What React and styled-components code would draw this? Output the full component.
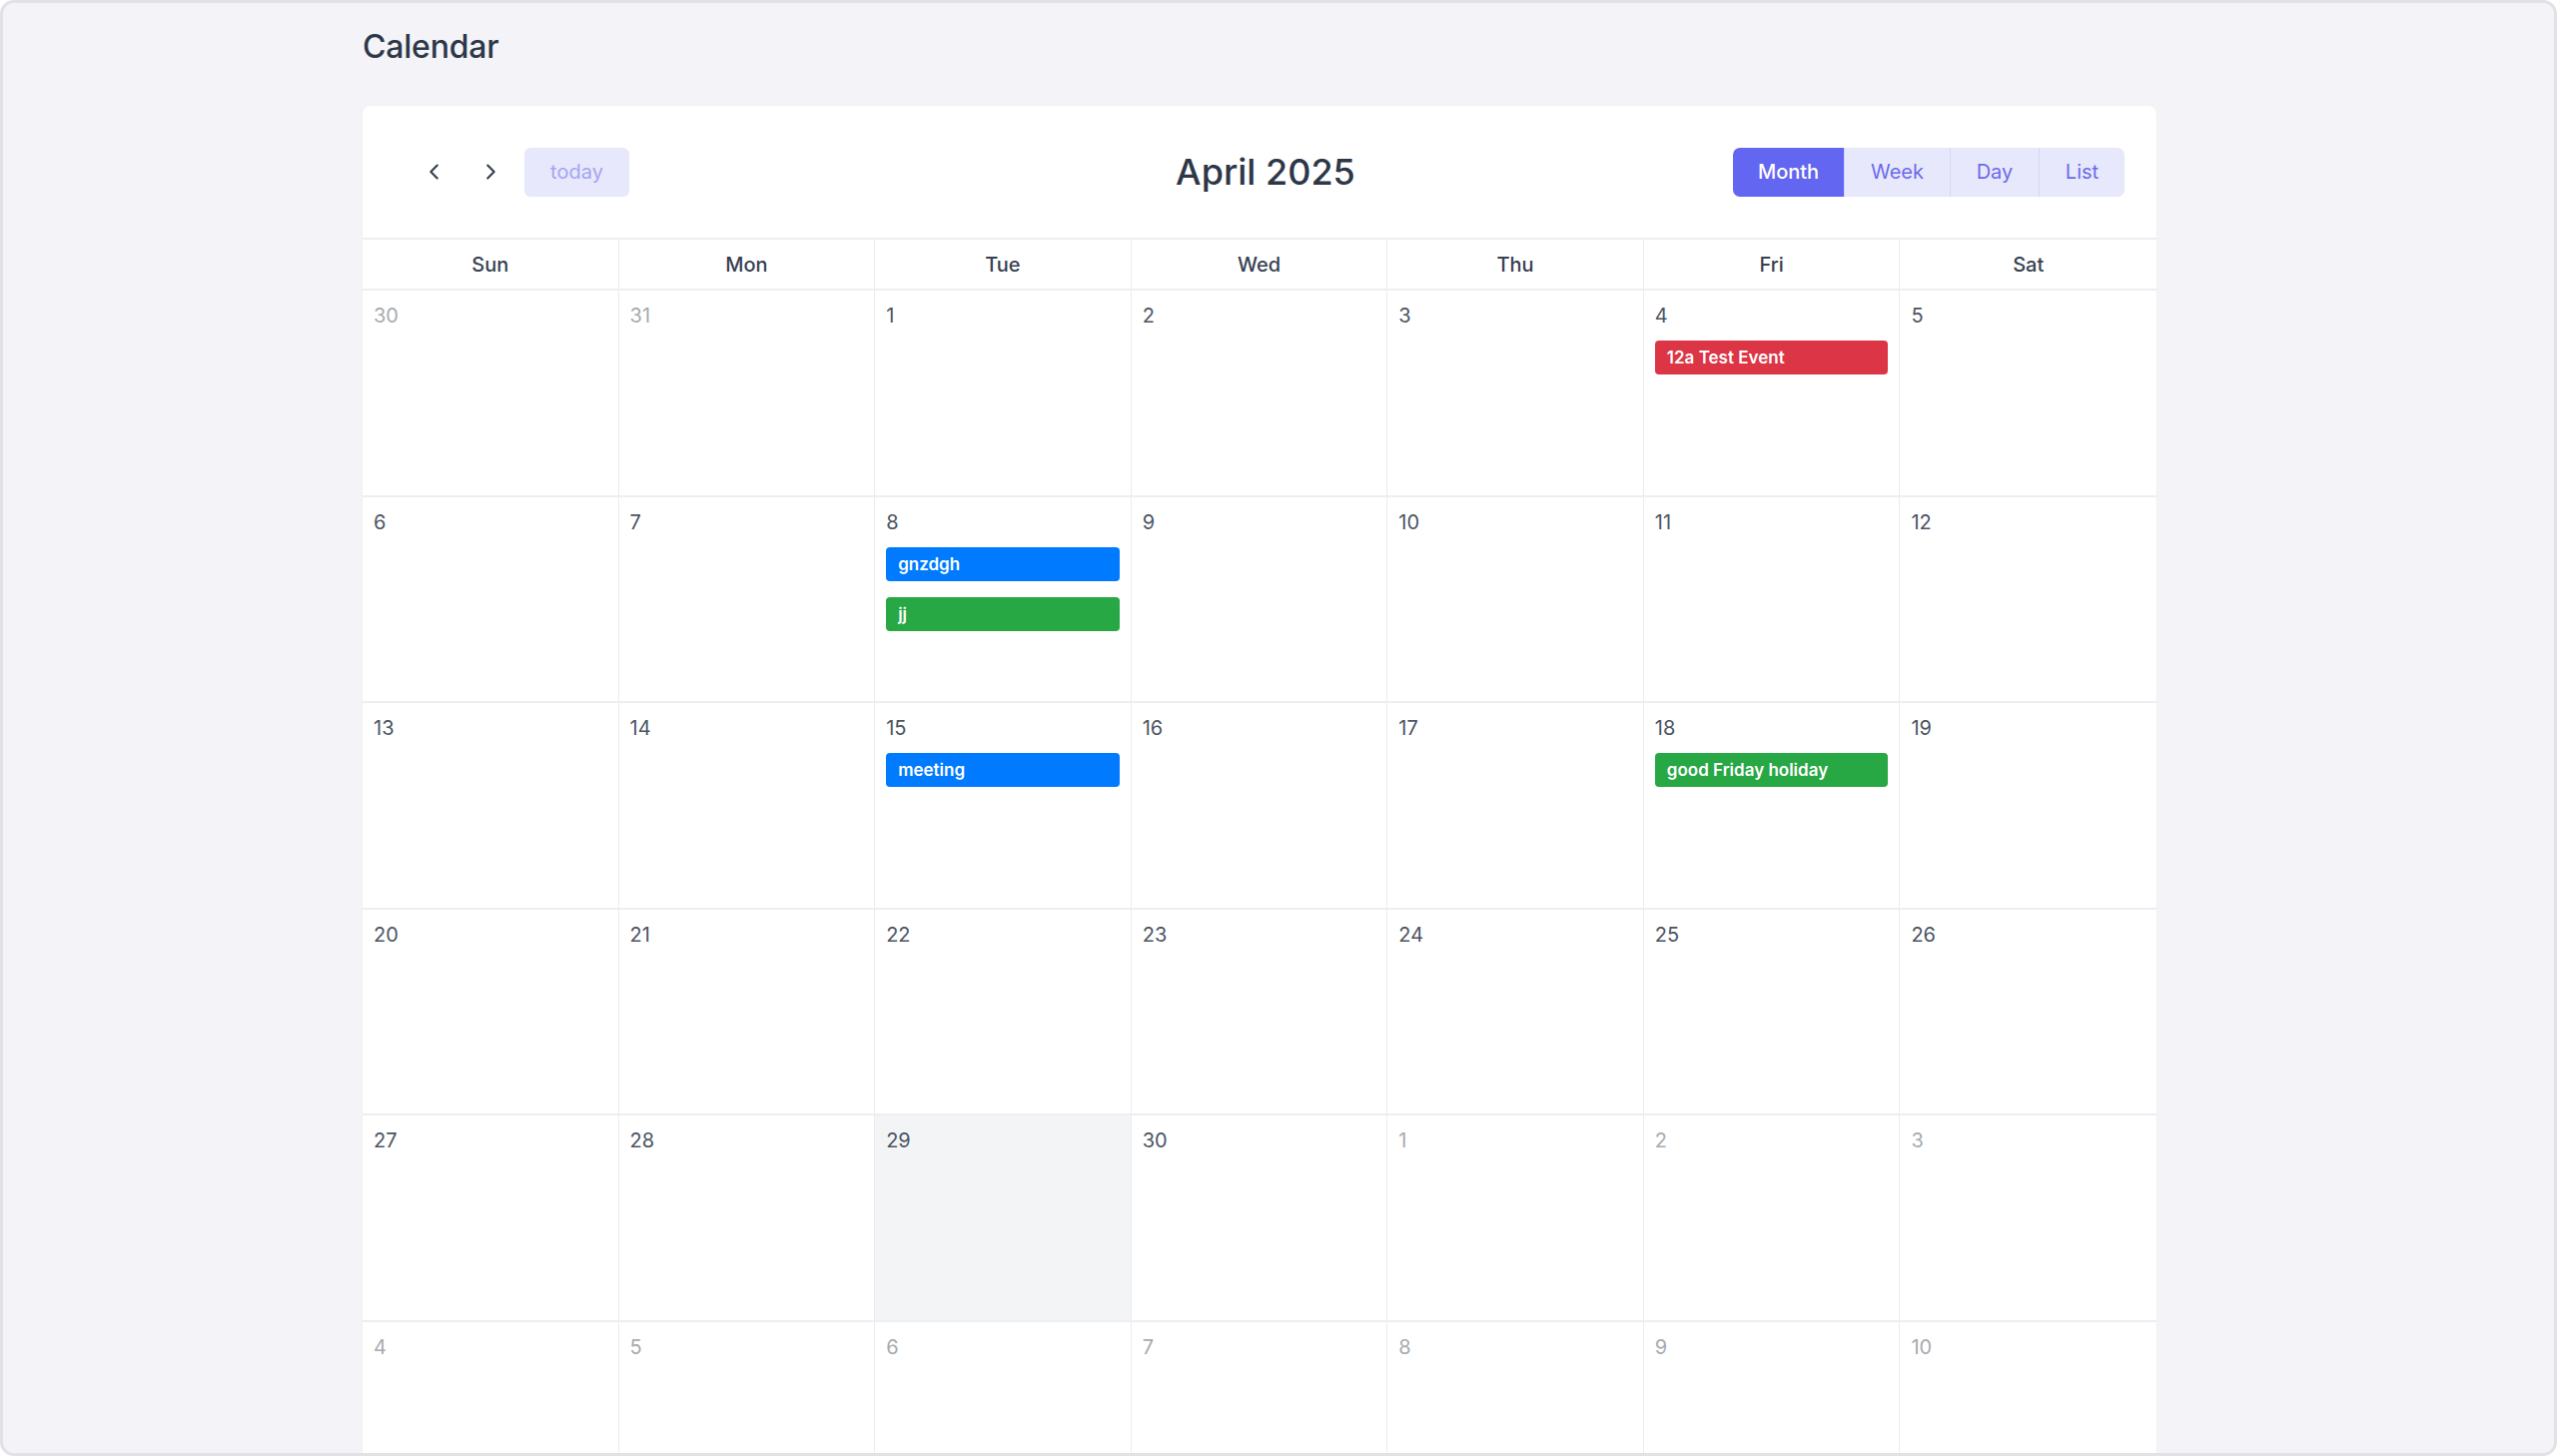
import React from "react";
import styled, { createGlobalStyle } from "styled-components";

const Global = createGlobalStyle`
  html, body { margin: 0; padding: 0; overflow: hidden; }
  body { font-family: "Inter", "Noto Sans", sans-serif; }
  * { box-sizing: border-box; }
`;

const Frame = styled.div`
  width: 2560px; height: 1458px; background: #f4f4f8;
  border: 3px solid #e2e2e6; border-radius: 14px; overflow: hidden;
  padding: 0 0 0 360px;
`;
const PageTitle = styled.h1`
  margin: 0; height: 103px; padding-top: 24px;
  font-size: 32px; font-weight: 500; color: #2d3748; letter-spacing: -0.2px;
`;
const Card = styled.div`
  width: 1796px; background: #fff; border-radius: 8px 8px 0 0;
  box-shadow: 0 1px 3px rgba(0,0,0,0.05);
`;
const Toolbar = styled.div`
  height: 134px; display: grid; grid-template-columns: 1fr auto 1fr;
  align-items: center; padding: 0 32px 0 44px; border-bottom: 2px solid #eeeef2;
`;
const Left = styled.div` display: flex; align-items: center; gap: 0; `;
const NavBtn = styled.button`
  width: 56px; height: 49px; border: 0; background: none; color: #374151;
  display: flex; align-items: center; justify-content: center; padding: 0;
`;
const TodayBtn = styled.button`
  height: 49px; width: 105px; border: 0; border-radius: 6px; margin-left: 6px;
  background: #e8e8fc; color: #a5a5f0; font-family: inherit; font-size: 20px;
`;
const MonthTitle = styled.h2`
  margin: 0; font-size: 36px; font-weight: 500; color: #2d3748;
`;
const Views = styled.div` justify-self: end; display: flex; border-radius: 7px; overflow: hidden; `;
const ViewBtn = styled.button`
  height: 49px; width: ${p => p.$w}px; border: 0; font-family: inherit; font-size: 20px;
  border-left: ${p => p.$first ? "0" : "1px solid #d6d6f6"};
  background: ${p => p.$active ? "#6366f1" : "#e8e8fc"};
  color: ${p => p.$active ? "#fff" : "#6b6bea"}; font-weight: ${p => p.$active ? 500 : 400};
`;
const Grid = styled.div`
  display: grid; grid-template-columns: repeat(7, 1fr);
`;
const HeadCell = styled.div`
  height: 51px; display: flex; align-items: center; justify-content: center;
  font-size: 20px; font-weight: 500; color: #374151;
  border-right: 1px solid #ececf0; border-bottom: 2px solid #eeeef2;
  &:last-child { border-right: 0; }
`;
const DayCell = styled.div`
  height: 206.5px; padding: 12px 11px; display: flex; flex-direction: column;
  border-right: 1px solid #ececf0; border-bottom: 2px solid #eeeef2;
  background: ${p => p.$today ? "#f3f4f6" : "#fff"};
  &:nth-child(7n) { border-right: 0; }
`;
const DayNum = styled.div`
  font-size: 20px; color: ${p => p.$other ? "#a8aab0" : "#4b5563"}; height: 26px; line-height: 26px;
  margin-bottom: 12px;
`;
const Event = styled.div`
  height: 34px; border-radius: 4px; margin-bottom: 16px; padding: 0 12px;
  display: flex; align-items: center; color: #fff; font-size: 17px; font-weight: 600;
  background: ${p => p.$c};
`;

const RED = "#dc3545", BLUE = "#007bff", GREEN = "#28a745";
const events = {
  "4": [["12a Test Event", RED]],
  "8": [["gnzdgh", BLUE], ["jj", GREEN]],
  "15": [["meeting", BLUE]],
  "18": [["good Friday holiday", GREEN]],
};

const days = [];
[30, 31].forEach(d => days.push({ d, other: true }));
for (let d = 1; d <= 30; d++) days.push({ d, other: false });
for (let d = 1; d <= 10; d++) days.push({ d, other: true });

const Chev = ({ dir }) => (
  <svg width="22" height="22" viewBox="0 0 24 24" fill="none" stroke="currentColor" strokeWidth="2.4" strokeLinecap="round" strokeLinejoin="round">
    {dir === "l" ? <path d="M15 5l-7 7 7 7" /> : <path d="M9 5l7 7-7 7" />}
  </svg>
);

export default function App() {
  return (
    <>
      <Global />
      <Frame>
        <PageTitle>Calendar</PageTitle>
        <Card>
          <Toolbar>
            <Left>
              <NavBtn><Chev dir="l" /></NavBtn>
              <NavBtn><Chev dir="r" /></NavBtn>
              <TodayBtn>today</TodayBtn>
            </Left>
            <MonthTitle>April 2025</MonthTitle>
            <Views>
              <ViewBtn $first $active $w={111}>Month</ViewBtn>
              <ViewBtn $w={106}>Week</ViewBtn>
              <ViewBtn $w={89}>Day</ViewBtn>
              <ViewBtn $w={86}>List</ViewBtn>
            </Views>
          </Toolbar>
          <Grid>
            {["Sun", "Mon", "Tue", "Wed", "Thu", "Fri", "Sat"].map(n => <HeadCell key={n}>{n}</HeadCell>)}
          </Grid>
          <Grid>
            {days.map((x, i) => (
              <DayCell key={i} $today={!x.other && x.d === 29}>
                <DayNum $other={x.other}>{x.d}</DayNum>
                {!x.other && (events[x.d] || []).map(([t, c]) => <Event key={t} $c={c}>{t}</Event>)}
              </DayCell>
            ))}
          </Grid>
        </Card>
      </Frame>
    </>
  );
}
